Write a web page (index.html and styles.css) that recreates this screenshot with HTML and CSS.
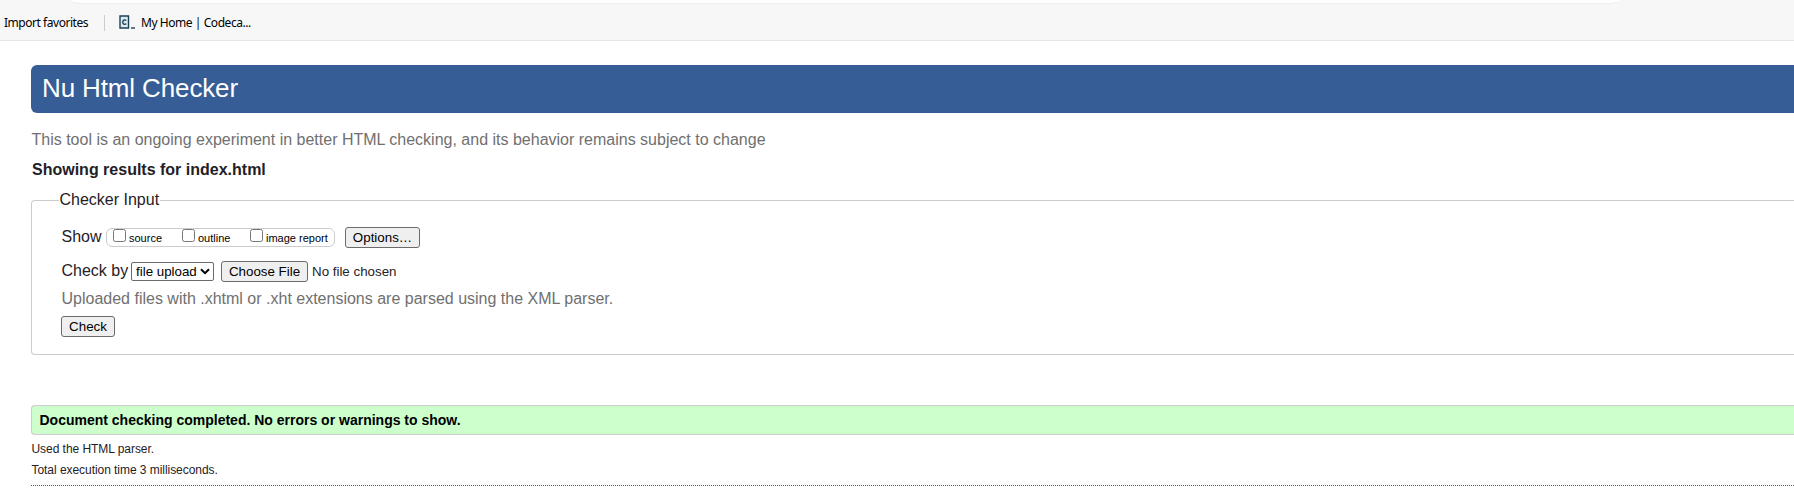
FILE: index.html
```html
<!DOCTYPE html>
<html lang="en">
<head>
<meta charset="utf-8">
<title>Nu Html Checker</title>
<link rel="stylesheet" href="styles.css">
</head>
<body>
<div class="browser">
  <div class="address"></div>
  <div class="favorites">
    <span class="import">Import favorites</span>
    <span class="separator"></span>
    <svg class="favicon" width="17" height="15" viewBox="0 0 17 15"><path d="M1 1h8.5v12H1z" fill="#dbe9f3" stroke="#1f4057" stroke-width="1.4"/><path d="M7.2 5.6Q6.7 4.8 5.6 4.8Q3.8 4.8 3.8 7.1Q3.8 9.4 5.6 9.4Q6.7 9.4 7.2 8.6" fill="none" stroke="#1f4057" stroke-width="1.3"/><path d="M12 13h4" stroke="#1f4057" stroke-width="1.4"/></svg>
    <span class="bookmark">My Home | Codeca...</span>
  </div>
</div>
<main class="page">
  <h1 class="title"><span>Nu Html Checker</span></h1>
  <p class="tagline">This tool is an ongoing experiment in better HTML checking, and its behavior remains subject to change</p>
  <h2 class="results-for">Showing results for index.html</h2>
  <form class="form">
    <fieldset class="input">
      <legend class="legend">Checker Input</legend>
      <div class="row show-row">
        <span class="label">Show</span>
        <div class="checks">
          <label class="check source"><input class="box" type="checkbox"><span>source</span></label>
          <label class="check outline"><input class="box" type="checkbox"><span>outline</span></label>
          <label class="check report"><input class="box" type="checkbox"><span>image report</span></label>
        </div>
        <button class="button options" type="button">Options…</button>
      </div>
      <div class="row by-row">
        <span class="label by">Check by</span>
        <div class="select"><span>file upload</span><svg width="10" height="7" viewBox="0 0 10 7"><path d="M1 1.2l4 4 4-4" fill="none" stroke="#000" stroke-width="2"/></svg></div>
        <button class="button choose" type="button">Choose File</button>
        <span class="nofile">No file chosen</span>
      </div>
      <p class="hint">Uploaded files with .xhtml or .xht extensions are parsed using the XML parser.</p>
      <button class="button submit" type="button">Check</button>
    </fieldset>
  </form>
  <p class="success">Document checking completed. No errors or warnings to show.</p>
  <p class="detail">Used the HTML parser.</p>
  <p class="detail">Total execution time 3 milliseconds.</p>
  <div class="rule"></div>
</main>
</body>
</html>
```
FILE: styles.css
```css
* { box-sizing: border-box; }
body {
  margin: 0;
  height: 503px;
  overflow: hidden;
  background: #fff;
  color: #1f2126;
  font: 16px/20px "Liberation Sans", Arial, sans-serif;
}
h1, h2, p { margin: 0; font-weight: normal; white-space: nowrap; }
.browser { height: 41px; background: #f7f7f7; border-bottom: 1px solid #e5e5e5; overflow: hidden; }
.address { height: 3px; margin: 0 174px 0 71px; background: #fff; border-radius: 0 0 14px 14px / 0 0 3px 3px; box-shadow: 0 1px 1px #efefef; }
.favorites { display: flex; align-items: center; height: 41px; margin-top: -1px; padding-left: 4px; color: #000; font: 12px/16px "Noto Sans", sans-serif; white-space: nowrap; }
.import { width: 100px; letter-spacing: -0.46px; }
.separator { width: 1px; height: 16px; background: #ccc; }
.favicon { margin-left: 14px; }
.bookmark { margin-left: 5px; letter-spacing: -0.44px; }
.page { padding: 24px 0 0 31px; }
.title { height: 48px; padding: 0 11px; background: #365d95; border-radius: 6px 0 0 6px; color: #fff; font-size: 26px; line-height: 46px; letter-spacing: -0.13px; }
.tagline { margin: 17px 0 0 0.5px; color: #707070; }
.results-for { margin: 10px 0 0 1px; font-size: 16px; font-weight: bold; }
.form { margin-top: 10px; }
.input { height: 165px; margin: 0; padding: 17px 0 0 29px; border: 1px solid #ccc; border-right: 0; border-radius: 4px 0 0 4px; min-width: 0; }
.legend { height: 20px; margin-left: -2px; padding: 0 1px 0 0.5px; }
.row { display: flex; align-items: center; height: 21px; }
.label { width: 45px; padding-left: 0.5px; line-height: 19px; margin-top: -2px; }
.checks { display: flex; width: 229px; height: 19px; padding-left: 6px; border: 1px solid #ccc; border-radius: 6px; }
.check { display: flex; font-size: 11px; line-height: 19px; white-space: nowrap; color: #000; }
.box { width: 13px; height: 13px; margin: 0 3px 0 0; }
.source { width: 69px; }
.outline { width: 68px; }
.button { height: 21px; margin: 0; padding: 0; border: 1px solid #6b6b6b; border-radius: 3px; background: #efefef; color: #000; font: 13.333px/17px "Liberation Sans", Arial, sans-serif; white-space: nowrap; }
.options { width: 75px; margin-left: 10px; }
.by-row { margin-top: 13px; }
.by { width: 70px; white-space: nowrap; }
.select { display: flex; align-items: center; justify-content: space-between; width: 83px; height: 19px; padding: 0 3px 0 4px; border: 1px solid #6b6b6b; border-radius: 2px; color: #000; font-size: 13.333px; line-height: 17px; white-space: nowrap; }
.choose { width: 87px; margin-left: 7px; }
.nofile { margin-left: 4px; font-size: 13.333px; }
.hint { margin: 7px 0 0 0.5px; color: #707070; }
.submit { display: block; width: 54px; margin-top: 7px; }
.success { height: 30px; margin-top: 50px; padding-left: 7.5px; background: #cfc; border: 1px solid #ccc; border-right: 0; border-radius: 4px 0 0 4px; color: #000; font-size: 14px; font-weight: bold; line-height: 28px; }
.detail { margin: 4px 0 0 0.5px; font-size: 12px; line-height: 20px; letter-spacing: -0.05px; }
.detail + .detail { margin-top: 1px; }
.rule { margin-top: 5px; border-top: 1px dotted #555; }
```
